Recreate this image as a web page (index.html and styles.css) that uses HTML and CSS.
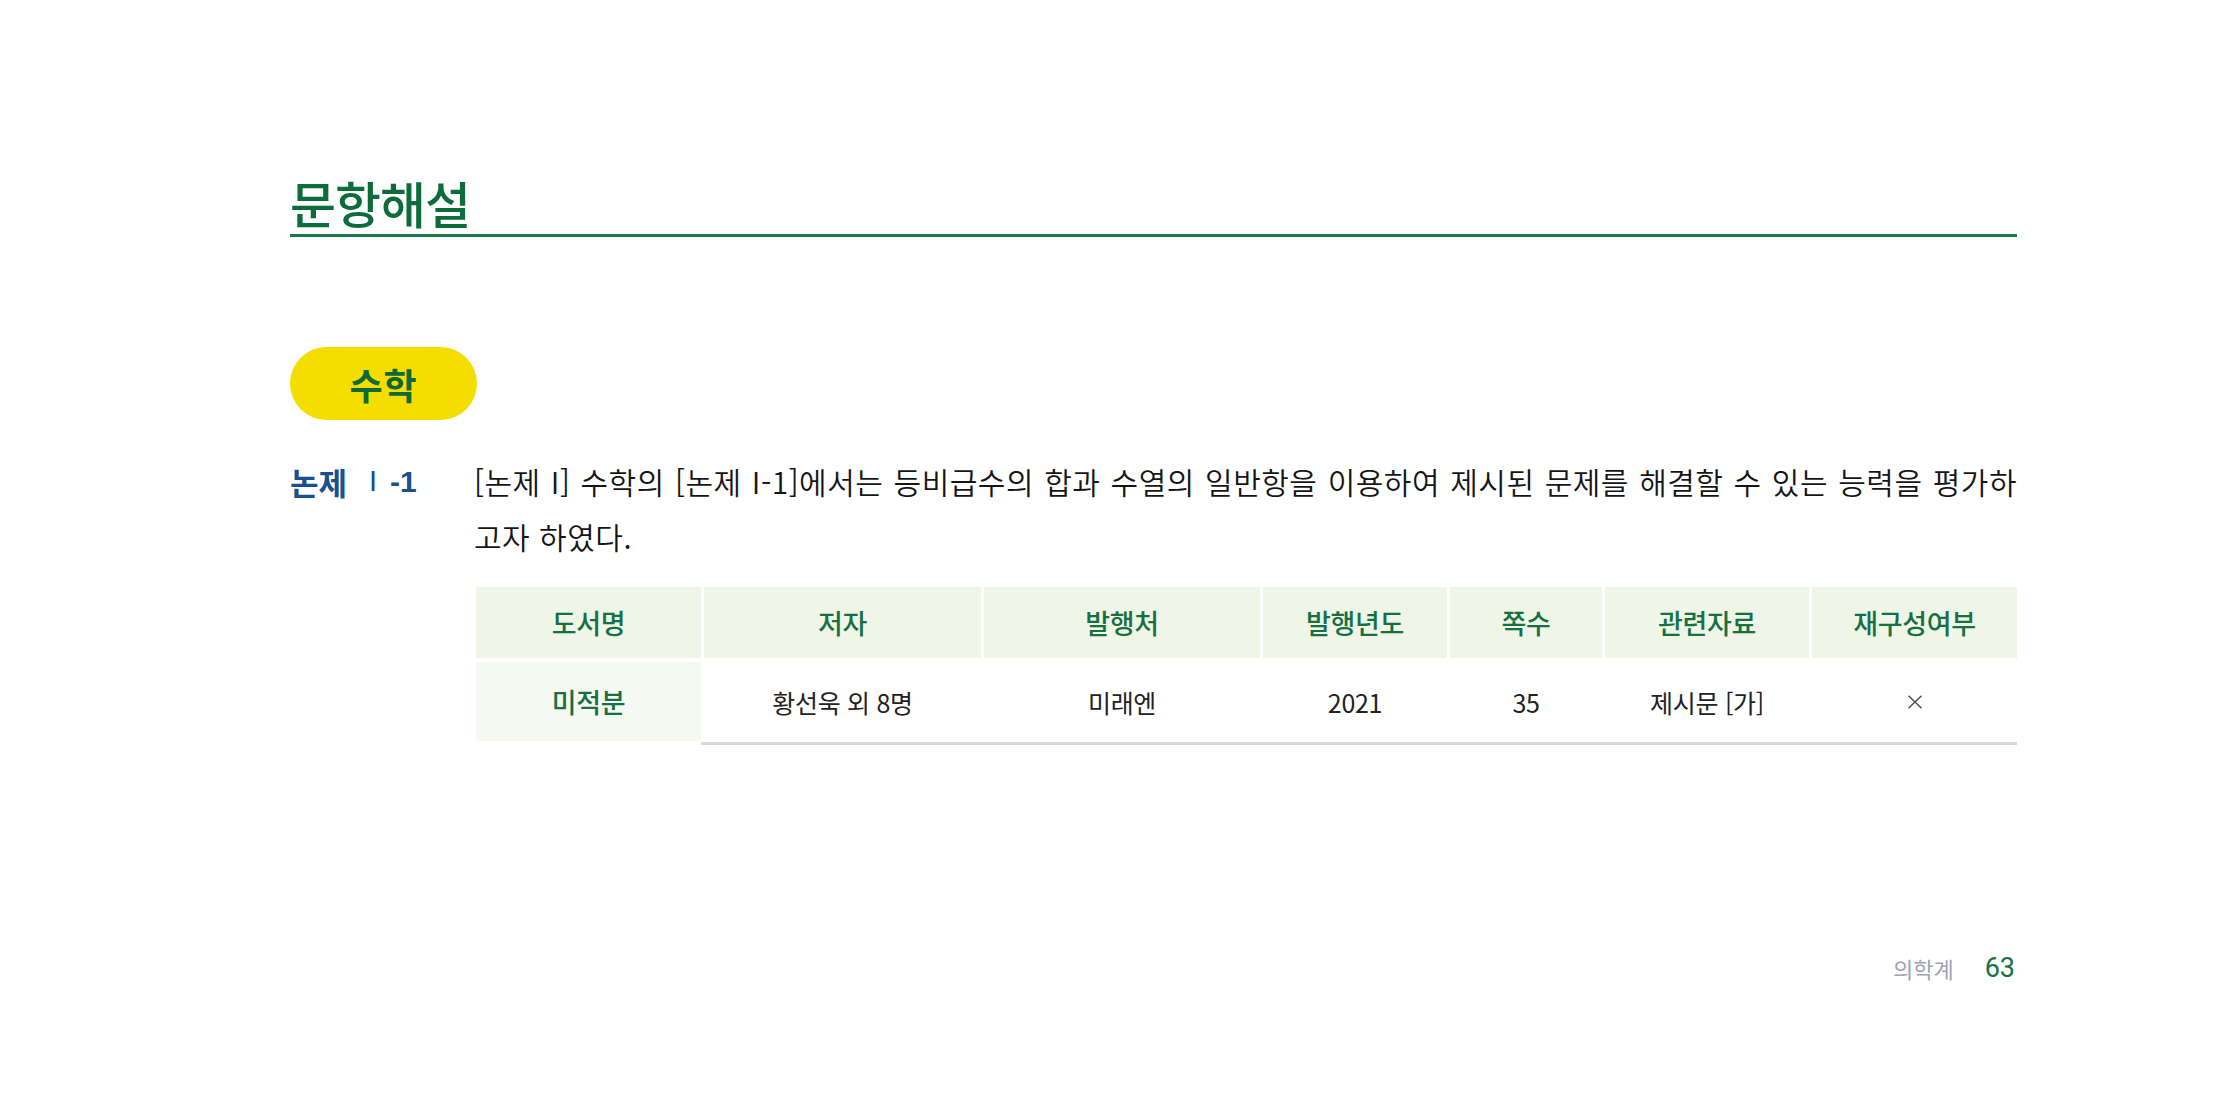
FILE: index.html
```html
<!DOCTYPE html>
<html lang="ko">
<head>
<meta charset="utf-8">
<title>문항해설</title>
<link rel="stylesheet" href="styles.css">
</head>
<body>
<div class="page">
  <h1 class="title">문항해설</h1>
  <div class="badge">수학</div>
  <div class="item">
    <div class="label"><span>논제</span><span class="roman">I</span><span class="num">-1</span></div>
    <div class="content">
      <p class="para">[논제 I] 수학의 [논제 I-1]에서는 등비급수의 합과 수열의 일반항을 이용하여 제시된 문제를 해결할 수 있는 능력을 평가하고자 하였다.</p>
      <div class="tbl">
        <div class="trow thead">
          <div class="cell">도서명</div>
          <div class="cell">저자</div>
          <div class="cell">발행처</div>
          <div class="cell">발행년도</div>
          <div class="cell">쪽수</div>
          <div class="cell">관련자료</div>
          <div class="cell">재구성여부</div>
        </div>
        <div class="trow tbody">
          <div class="cell first">미적분</div>
          <div class="cell">황선욱 외 8명</div>
          <div class="cell">미래엔</div>
          <div class="cell">2021</div>
          <div class="cell">35</div>
          <div class="cell">제시문 [가]</div>
          <div class="cell"><svg class="xmark" width="16" height="14" viewBox="0 0 16 14"><path d="M1.5 0.8 L14.5 13.2 M14.5 0.8 L1.5 13.2" stroke="#4a4a4a" stroke-width="1.4" fill="none"/></svg></div>
          <div class="rule"></div>
        </div>
      </div>
    </div>
  </div>
  <div class="footer"><span class="mag">의학계</span><span class="pno">63</span></div>
</div>
</body>
</html>
```

FILE: styles.css
```css
* { box-sizing: border-box; }
html, body { margin: 0; padding: 0; background: #ffffff; }
body {
  font-family: "Noto Sans CJK KR", "Noto Sans", sans-serif;
  color: #222222;
}
.page {
  width: 1727px;
  margin-left: 290px;
}
.title {
  margin: 174px 0 0 0;
  font-size: 50px;
  line-height: 56px;
  font-weight: 500;
  color: #0c6d3b;
  padding-bottom: 4px;
  border-bottom: 3px solid #1f7748;
  letter-spacing: -1px;
}
.badge {
  margin-top: 110px;
  width: 187px;
  height: 73px;
  border-radius: 37px;
  background: #f6dd00;
  color: #0d6a36;
  font-size: 36px;
  font-weight: 700;
  display: flex;
  align-items: center;
  justify-content: center;
  letter-spacing: 1px;
}
.item {
  margin-top: 34px;
  display: grid;
  grid-template-columns: 184px 1fr;
}
.label {
  display: flex;
  align-items: center;
  height: 55px;
  font-size: 31px;
  font-weight: 700;
  color: #17508c;
}
.label .roman {
  font-family: "Liberation Sans", sans-serif;
  font-weight: 400;
  font-size: 29px;
  margin-left: 22px;
}
.label .num {
  font-family: "Liberation Sans", sans-serif;
  font-weight: 700;
  font-size: 30px;
  margin-left: 13px;
}
.para {
  margin: 0;
  font-size: 30px;
  line-height: 55px;
  font-weight: 350;
  letter-spacing: 0.5px;
  text-align: justify;
  color: #151515;
}
.tbl {
  margin-top: 23px;
  margin-left: 2px;
}
.trow {
  display: grid;
  grid-template-columns: 225px 277px 276px 184px 152px 204px 205px;
  column-gap: 3px;
}
.cell {
  display: flex;
  align-items: center;
  justify-content: center;
}
.thead .cell {
  height: 71px;
  background: #eff6e8;
  color: #177043;
  font-size: 27px;
  font-weight: 500;
  letter-spacing: -0.3px;
}
.tbody {
  margin-top: 4px;
}
.tbody .cell {
  height: 79px;
  font-size: 25px;
  color: #222222;
  letter-spacing: -0.3px;
}
.tbody .cell.first {
  background: #f5f9f1;
  color: #177043;
  font-size: 27px;
  font-weight: 500;
}
.rule {
  grid-column: 2 / -1;
  height: 3px;
  background: #d7d9dc;
  margin-left: -3px;
  margin-top: 1px;
}
.xmark { display: block; }
.footer {
  margin-top: 203px;
  display: flex;
  justify-content: flex-end;
  align-items: center;
  height: 40px;
  padding-right: 2px;
}
.mag {
  font-size: 22px;
  color: #9ea3b3;
}
.pno {
  margin-left: 31px;
  font-family: "Roboto", sans-serif;
  font-size: 27px;
  color: #187145;
}
```
